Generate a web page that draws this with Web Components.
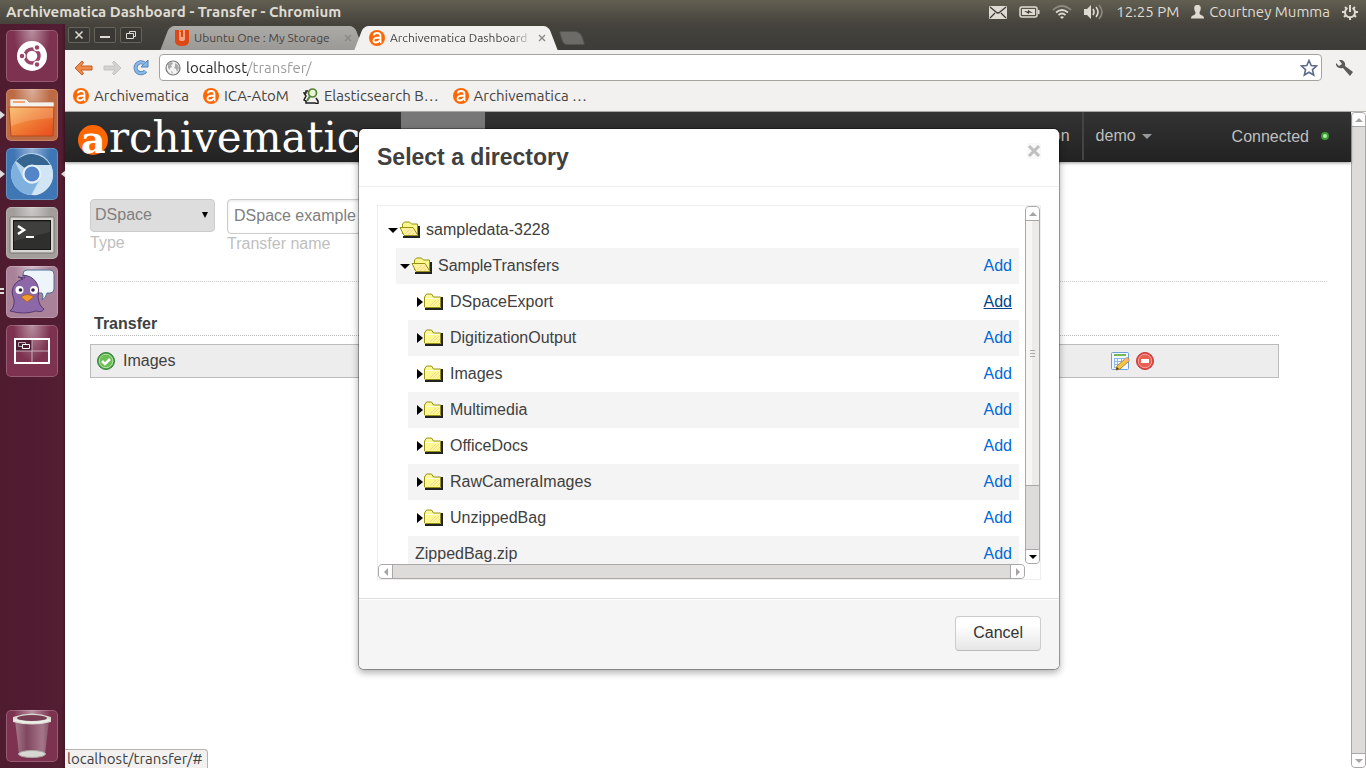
<!DOCTYPE html>
<html lang="en">
<head>
<meta charset="utf-8">
<title>Archivematica Dashboard - Transfer - Chromium</title>
<style>
    html, body {
        height: 100%;
        margin: 0;
    }
    body {
        font-family: "Liberation Sans", Arial, sans-serif;
        font-size: 16px;
        line-height: 20px;
        color: #404040;
        overflow: hidden;
    }
</style>
</head>
<body>
<desktop-shell></desktop-shell>

<script>
const UI_FONT = 'Ubuntu, "Noto Sans", sans-serif';

const icones = {
    mail: `<svg width="18" height="13" viewBox="0 0 18 13"><rect width="18" height="13" rx="1" fill="#dfdbd2"/><path d="M1 1l6 5q2 2 4 0l6-5M1 12l5-5M17 12l-5-5" fill="none" stroke="#3c3b37" stroke-width="1.3"/></svg>`,
    battery: `<svg width="21" height="12" viewBox="0 0 21 12"><rect x="1" y="1" width="17" height="10" rx="2" fill="none" stroke="#dfdbd2" stroke-width="1.5"/><path d="M19 4h1.500v4H19z" fill="#dfdbd2"/><path d="M3 3h13v6H3z" fill="#dfdbd2"/><path d="M5 5l4 .5V4l5 3-4-.5V8z" fill="#3c3b37"/></svg>`,
    wifi: `<svg width="20" height="14" viewBox="0 0 20 14" fill="none" stroke-width="1.700"><path d="M1 5Q10-3 19 5" stroke="#8c897f"/><path d="M4 7.500q6-5 12 0M6.500 10q3.500-3 7 0" stroke="#dfdbd2"/><path d="M8 12q2-1.500 4 0l-2 2z" fill="#dfdbd2"/></svg>`,
    volume: `<svg width="20" height="16" viewBox="0 0 20 16" fill="none" stroke-width="1.600"><path d="M0 5h3l4-4v14l-4-4H0z" fill="#dfdbd2"/><path d="M9 5q2 3 0 6M12 3q4 5 0 10" stroke="#dfdbd2"/><path d="M15 1q6 7 0 14" stroke="#8c897f"/></svg>`,
    user: `<svg width="13" height="14" viewBox="0 0 13 14"><path d="M6.500 0C9.500 0 10 2 9.700 4c-.2 2-1 2.500-1.200 3.500 0 1.500.5 2 2 2.700 2 .8 2.500 1.500 2.500 3.300H0c0-1.800.5-2.500 2.500-3.300 1.500-.7 2-1.200 2-2.700C4.300 6.500 3.500 6 3.300 4 3 2 3.500 0 6.500 0z" fill="#dfdbd2"/></svg>`,
    session: `<svg width="16" height="16" viewBox="0 0 16 16" fill="none" stroke="#dfdbd2"><path d="M5.500 4A5 5 0 1 0 10.500 4" stroke-width="2"/><path d="M8 1v7" stroke-width="2"/><path d="M3 3l1.500 1.500M13 3l-1.500 1.500M0 8h3M13 8h3M2 13l2-2M14 13l-2-2M8 13v3" stroke-width="2"/></svg>`,
    ubuntu: `<svg width="52" height="52" viewBox="0 0 52 52"><circle cx="26" cy="26" r="15" fill="#fff"/><circle cx="26" cy="26" r="7" fill="none" stroke="#9a4668" stroke-width="3.500"/><g stroke="#fff" stroke-width="1.500" fill="#9a4668"><circle cx="16" cy="26" r="3"/><circle cx="31" cy="17.500" r="3"/><circle cx="31" cy="34.500" r="3"/></g></svg>`,
    files: `<svg width="52" height="52" viewBox="0 0 52 52"><defs><linearGradient id="f" x2="1" y2="1"><stop stop-color="#f9b75c"/><stop offset=".45" stop-color="#f08037"/><stop offset="1" stop-color="#e84a1c"/></linearGradient></defs><path d="M4 20V11q0-1 1-1h14q2 0 3 2l1 1h24q1 0 1 1v6z" fill="#f5f2ee" stroke="#bf7a50" stroke-width=".7"/><path d="M7 12h12v2H7z" fill="#f4a577"/><path d="M3 18h45l-1 29H5z" fill="url(#f)" stroke="#b84a1b"/><path d="M4 19h43v10Q22 30 5 37z" fill="#fff" opacity=".16"/></svg>`,
    chromium: `<svg width="52" height="52" viewBox="0 0 52 52"><circle cx="26" cy="26" r="21" fill="#b5d4ee"/><path d="M26 26L10 13a21 21 0 0 1 34 4H27z" fill="#36658f"/><path d="M9 14A21 21 0 0 0 25 47l7-13q-9 5-15-4z" fill="#7fb0de"/><path d="M28 17h17q6 16-6 26-6 5-13 4l9-17z" fill="#d2e5f5"/><circle cx="26" cy="26" r="9.500" fill="#e7f2fb"/><circle cx="26" cy="26" r="7.500" fill="#5485c8"/></svg>`,
    terminal: `<svg width="52" height="52" viewBox="0 0 52 52"><rect x="4" y="10" width="44" height="36" rx="1" fill="#d8d6d4" stroke="#77736f"/><rect x="7.500" y="13.500" width="37" height="29" fill="#2f2f2d" stroke="#171715"/><path d="M8 15h36v10L8 34z" fill="#fff" opacity=".08"/><path d="M12 19l6 4-6 4" fill="none" stroke="#fff" stroke-width="2.500"/><path d="M20 30h8" stroke="#fff" stroke-width="2"/></svg>`,
    pidgin: `<svg width="52" height="52" viewBox="0 0 52 52"><path d="M21 4h23q4 0 4 4v15q0 4-4 4h-3q-1 5-5 7 2-4 0-7H21q-4 0-4-4V8q0-4 4-4z" fill="#edf5fb" stroke="#4e7396"/><path d="M4 45q5-4 4-12-4-8 1-15 3-4 8-5l-5-2 7 1-2-3q9 1 13 7 4 6 2 15 1 9 6 12-2 4-8 2-12 4-26 0z" fill="#8d68a8" stroke="#563a70"/><circle cx="13.500" cy="24" r="4" fill="#fff"/><circle cx="28" cy="24" r="4" fill="#fff"/><circle cx="14.500" cy="24" r="1.800" fill="#33203d"/><circle cx="27" cy="24" r="1.800" fill="#33203d"/><path d="M15 31q6-5 13 0l-7 5z" fill="#f39a2d" stroke="#a65d16" stroke-width=".8"/></svg>`,
    workspaces: `<svg width="52" height="52" viewBox="0 0 52 52" fill="none"><path d="M10 15h16v11H10z" fill="#4d1c33"/><path d="M26 14v24M9 26h34" stroke="#c5b2bc"/><rect x="9" y="14" width="34" height="24" stroke="#fff" stroke-width="2"/><path d="M12.500 17.500h7v4h-7z" stroke="#bcaab4"/><path d="M16.500 19.500h7v4h-7z" stroke="#fff" fill="#4d1c33"/></svg>`,
    trash: `<svg width="52" height="52" viewBox="0 0 52 52"><defs><linearGradient id="t"><stop stop-color="#a5798a"/><stop offset=".35" stop-color="#80475f"/><stop offset=".8" stop-color="#a6758a"/><stop offset="1" stop-color="#85576a"/></linearGradient></defs><path d="M9 10l4 34q13 5 26 0l4-34z" fill="url(#t)"/><ellipse cx="26" cy="44" rx="13.500" ry="3.500" fill="#d8d8d3" stroke="#a9a7a5"/><path d="M7 7q19-7 38 0v5q-19 5-38 0z" fill="#d9d9d3"/><ellipse cx="26" cy="8" rx="15" ry="3" fill="#763c52"/><path d="M8 9q18 5 36 0v2q-18 5-36 0z" fill="#eeeee9"/></svg>`,
    orb: `<svg width="16" height="16" viewBox="0 0 16 16"><circle cx="8" cy="8" r="8" fill="#f60"/><path d="M4.800 5.500Q5 3 8 3q3.500 0 3.500 3v5.500q0 1 1 1M11 7.500Q4.500 7.500 4.500 10.500q0 2 2.300 2Q9.500 12.500 11 10" fill="none" stroke="#fff" stroke-width="1.800"/></svg>`,
    one: `<svg width="14" height="16" viewBox="0 0 14 16"><path d="M0 0h5v9q0 2 2 2t2-2V0h5v11q0 5-7 5t-7-5z" fill="#dd4814"/><path d="M4 0h6v9q0 2-3 2T4 9z" fill="#f1a384"/><path d="M5 1l2-1h1v7H6V2H5z" fill="#dd4814"/></svg>`,
    elastic: `<svg width="16" height="16" viewBox="0 0 16 16" fill="none"><path d="M5 3H3v2H1l2 3-2 4 2 1v2h9l3 1v-3l-2-3" stroke="#1d1d1d" stroke-width="1.500"/><circle cx="9.500" cy="5" r="4" fill="#e9f5d6" stroke="#548434" stroke-width="1.700"/><path d="M7 8l-3 5" stroke="#548434" stroke-width="2"/></svg>`,
    back: `<svg width="19" height="16" viewBox="0 0 19 16"><path d="M1 8l7-7 1.500 1.500L7 6h11v4H7l2.500 3.500L8 15z" fill="#ef8a49" stroke="#c45d24" stroke-linejoin="round"/></svg>`,
    forward: `<svg width="19" height="16" viewBox="0 0 19 16"><path d="M18 8l-7-7-1.500 1.500L12 6H1v4h11l-2.500 3.500L11 15z" fill="#d4d2d0" stroke="#c6c4c1" stroke-linejoin="round"/></svg>`,
    reload: `<svg width="17" height="17" viewBox="0 0 17 17"><path d="M12.500 4.500A5.500 5.500 0 1 0 13.500 12" fill="none" stroke="#4f81b5" stroke-width="4"/><path d="M16 1v7H9z" fill="#8ab8e6" stroke="#4f81b5"/><path d="M12.500 4.500A5.500 5.500 0 1 0 13.500 12" fill="none" stroke="#8ab8e6" stroke-width="2.500"/></svg>`,
    globe: `<svg width="16" height="16" viewBox="0 0 16 16"><circle cx="8" cy="8" r="7" fill="#f4f4f4" stroke="#777" stroke-width="1.200"/><path d="M3 4q2-2 4-2l1 2-2 1 1 2-2 1v2L3 8zM10 3l3 2 1 3-2 4-1-3-2-1 1-2zM6 11l2 1-1 2z" fill="#aaa"/></svg>`,
    star: `<svg width="18" height="18" viewBox="0 0 18 18"><path d="M9 1.500l2.200 5 5.300.5-4 3.600 1.200 5.400L9 13.200 4.300 16l1.200-5.400-4-3.600 5.300-.5z" fill="#fff" stroke="#5d6c8c" stroke-width="1.600"/></svg>`,
    wrench: `<svg width="17" height="16" viewBox="0 0 17 16"><path d="M3 0l3 0q4 2 3 6l8 6-3 4-7-8q-5 1-7-3V3l3 3 3-2z" fill="#5b5b5b"/></svg>`,
    open: `<svg width="21" height="17" viewBox="0 0 21 17"><path d="M4 16h16V5" fill="none" stroke="#222" stroke-width="2"/><path d="M3.500 13V3l2-2h5l2 2h6v10" fill="#fbf78d" stroke="#969017"/><path d="M1 6.500h13l5 8H5z" fill="#fdf29a" stroke="#969017"/><path d="M6 13l5-5M9 14l5-5M13 14l2-2" stroke="#f6cda0"/></svg>`,
    closed: `<svg width="20" height="17" viewBox="0 0 20 17"><path d="M2 16h17V4" fill="none" stroke="#222" stroke-width="2"/><path d="M1.500 14V4l2-3h5l2 3h7v10.500h-15z" fill="#fdf88f" stroke="#969017"/><path d="M2.500 5.500h14" stroke="#fffde0"/><path d="M7 13l6-6M10 13l6-6M14 13l3-3" stroke="#f8d1a0"/></svg>`,
    ok: `<svg width="18" height="18" viewBox="0 0 18 18"><circle cx="9" cy="9" r="8.500" fill="#43a047" stroke="#378239"/><circle cx="9" cy="9" r="6.800" fill="#6cbf55" stroke="#b9e4a8"/><path d="M5 9l3 3 5-5" fill="none" stroke="#fff" stroke-width="2.500"/></svg>`,
    edit: `<svg width="19" height="19" viewBox="0 0 19 19"><rect x=".5" y=".5" width="17" height="17" rx="1" fill="#f2f8ff" stroke="#6da0dc"/><path d="M3 3h12" stroke="#75b85b" stroke-width="2"/><path d="M3 6.500h12M3 9.500h11M3 12.500h6M3.500 6v10M6.500 6v10M10.500 6v5M3 15.500h3" stroke="#8cb9ea"/><path d="M5 18l1-4 9-8q3-1 3 3l-9 8z" fill="#f6c747" stroke="#b48425"/><path d="M5 18l1-3 2 2z" fill="#453417"/><path d="M14 6.500q3-1 4 2l-1.500 1.500-3-2.500z" fill="#efb1a0"/></svg>`,
    remove: `<svg width="18" height="18" viewBox="0 0 18 18"><circle cx="9" cy="9" r="8.500" fill="#dd4141" stroke="#c93838"/><circle cx="9" cy="9" r="6.800" fill="#e76052" stroke="#f5aaa3"/><path d="M5 7h8v4H5z" fill="#fff"/></svg>`,
    dismiss: `<svg width="14" height="16" viewBox="0 0 14 16"><path d="M2 3l10 10M12 3L2 13" stroke="#bfbfbf" stroke-width="3"/></svg>`,
    tabclose: `<svg width="8" height="8" viewBox="0 0 8 8"><path d="M1 1l6 6M7 1L1 7" stroke="#8a8885" stroke-width="1.400"/></svg>`,
    close: `<svg width="22" height="16" viewBox="0 0 22 16"><path d="M7.500 4.500l7 7M14.500 4.500l-7 7" stroke="#dfdbd2" stroke-width="1.500"/></svg>`,
    minimize: `<svg width="22" height="16" viewBox="0 0 22 16"><path d="M6 10h10" stroke="#dfdbd2" stroke-width="2"/></svg>`,
    restore: `<svg width="22" height="16" viewBox="0 0 22 16" fill="none" stroke="#dfdbd2"><path d="M9.500 6.500v-2h6v5h-2M6.500 6.500h7v5h-7z"/></svg>`
};

function definir(nome, html, depois) {
    const template = document.createElement('template');
    template.innerHTML = html;
    customElements.define(nome, class extends HTMLElement {
        constructor() {
            super();
            this.attachShadow({ mode: 'open' }).appendChild(template.content.cloneNode(true));
        }
        connectedCallback() {
            if (depois) depois(this, this.shadowRoot);
        }
    });
}

definir('ui-icon', `
    <style>
        :host { display: inline-flex; flex: none; }
        svg { display: block; }
    </style>
    <span aria-hidden="true"></span>
`, (el, root) => {
    root.querySelector('span').innerHTML = icones[el.getAttribute('name')];
});

definir('top-panel', `
    <style>
        :host {
            display: flex;
            align-items: center;
            box-sizing: border-box;
            height: 24px;
            padding: 0 8px 0 6px;
            background: linear-gradient(#625f52, #45433c);
            color: #dfdbd2;
            font: 15px/24px ${UI_FONT};
        }
        b { flex: 1; }
        .indicadores { display: flex; align-items: center; gap: 12px; }
        .usuario { display: flex; align-items: center; gap: 5px; }
    </style>
    <b>Archivematica Dashboard - Transfer - Chromium</b>
    <div class="indicadores">
        <ui-icon name="mail"></ui-icon>
        <ui-icon name="battery"></ui-icon>
        <ui-icon name="wifi"></ui-icon>
        <ui-icon name="volume"></ui-icon>
        <span>12:25 PM</span>
        <span class="usuario"><ui-icon name="user"></ui-icon>Courtney Mumma</span>
        <ui-icon name="session"></ui-icon>
    </div>
`);

definir('launcher-tile', `
    <style>
        :host { display: block; position: relative; --cor: #7d3350; }
        button {
            display: block;
            box-sizing: border-box;
            width: 52px;
            height: 52px;
            padding: 0;
            border: 0;
            border-radius: 5px;
            background: radial-gradient(ellipse at 50% 0, rgba(255, 255, 255, .45), transparent 50%), var(--cor);
            box-shadow: inset 0 0 0 1px rgba(255, 255, 255, .2);
        }
        .esq, .dir { display: none; position: absolute; top: 22px; border: 4px solid transparent; }
        .esq { left: -6px; border-left: 5px solid #ddd; border-right: 0; }
        .dir { right: -7px; border-right: 5px solid #ddd; border-left: 0; }
        :host([aberto]) .esq, :host([ativo]) .dir { display: block; }
        :host([duplo]) .esq { display: block; width: 4px; height: 2px; border: 2px solid #ddd; border-width: 2px 0; }
    </style>
    <i class="esq"></i><button type="button"><slot></slot></button><i class="dir"></i>
`, (el, root) => root.querySelector('button').setAttribute('aria-label', el.getAttribute('label')));

definir('app-launcher', `
    <style>
        :host {
            display: flex;
            flex-direction: column;
            gap: 7px;
            box-sizing: border-box;
            width: 65px;
            flex: none;
            padding: 6px;
            background: linear-gradient(90deg, #4f1b2f, #531d32 95%, #451628);
        }
        launcher-tile:last-child { margin-top: auto; }
    </style>
    <launcher-tile label="Dash home"><ui-icon name="ubuntu"></ui-icon></launcher-tile>
    <launcher-tile label="Files" aberto style="--cor: #bd6b45"><ui-icon name="files"></ui-icon></launcher-tile>
    <launcher-tile label="Chromium" aberto ativo style="--cor: #3f76b4"><ui-icon name="chromium"></ui-icon></launcher-tile>
    <launcher-tile label="Terminal" style="--cor: #a39e9c"><ui-icon name="terminal"></ui-icon></launcher-tile>
    <launcher-tile label="Pidgin" duplo style="--cor: #a98198"><ui-icon name="pidgin"></ui-icon></launcher-tile>
    <launcher-tile label="Workspaces"><ui-icon name="workspaces"></ui-icon></launcher-tile>
    <launcher-tile label="Trash"><ui-icon name="trash"></ui-icon></launcher-tile>
`);

definir('browser-tab', `
    <style>
        :host {
            display: flex;
            align-items: center;
            position: relative;
            isolation: isolate;
            box-sizing: border-box;
            width: 200px;
            height: 24px;
            padding: 0 9px 0 14px;
            gap: 5px;
            color: #45433f;
            font: 12px/24px ${UI_FONT};
            --fundo: linear-gradient(#adaba8, #9b9996);
        }
        :host([ativa]) { z-index: 1; margin-left: -6px; --fundo: #f2f1f0; }
        .forma { position: absolute; inset: 0; z-index: -1; }
        .forma::before, .forma::after {
            content: "";
            position: absolute;
            top: 0;
            bottom: 0;
            width: 60%;
            background: var(--fundo);
        }
        .forma::before { left: 4px; border-radius: 5px 0 0; transform: skewX(-21deg); }
        .forma::after { right: 2px; border-radius: 0 5px 0 0; transform: skewX(21deg); }
        .titulo { flex: 1; white-space: nowrap; overflow: hidden; }
        :host([ativa]) .titulo { -webkit-mask: linear-gradient(90deg, #000 85%, transparent); }
        button { display: flex; border: 0; padding: 0; background: none; }
    </style>
    <i class="forma"></i>
    <slot name="icone"></slot>
    <span class="titulo"><slot></slot></span>
    <button type="button" aria-label="Close tab"><ui-icon name="tabclose"></ui-icon></button>
`);

definir('browser-tabs', `
    <style>
        :host {
            display: flex;
            align-items: flex-end;
            height: 26px;
            padding-left: 3px;
            background: linear-gradient(#45433c, #3c3b37);
        }
        .controles { display: flex; gap: 4px; align-self: flex-start; margin-top: 3px; margin-right: 19px; }
        .controles button {
            display: flex;
            padding: 0;
            border: 0;
            border-radius: 2px;
            background: #393834;
            box-shadow: inset 0 0 0 1px #67645c;
        }
        .nova {
            width: 22px;
            height: 14px;
            padding: 0;
            margin: 0 0 5px 6px;
            border: 1px solid #55534e;
            border-radius: 2px 6px 2px 4px;
            background: #6d6b67;
            transform: skewX(18deg);
        }
    </style>
    <div class="controles">
        <button type="button" aria-label="Close"><ui-icon name="close"></ui-icon></button>
        <button type="button" aria-label="Minimize"><ui-icon name="minimize"></ui-icon></button>
        <button type="button" aria-label="Restore"><ui-icon name="restore"></ui-icon></button>
    </div>
    <browser-tab><ui-icon slot="icone" name="one"></ui-icon>Ubuntu One : My Storage</browser-tab>
    <browser-tab ativa><ui-icon slot="icone" name="orb"></ui-icon>Archivematica Dashboard</browser-tab>
    <button class="nova" type="button" aria-label="New tab"></button>
`);

definir('browser-toolbar', `
    <style>
        :host {
            display: block;
            background: #f2f1f0;
            border-bottom: 1px solid #b6b3af;
            font: 15px/20px ${UI_FONT};
        }
        .barra { display: flex; align-items: center; gap: 10px; padding: 4px 13px 0 9px; }
        .barra > button, .endereco button { display: flex; padding: 0; border: 0; background: none; }
        .endereco {
            flex: 1;
            display: flex;
            align-items: center;
            gap: 5px;
            height: 25px;
            margin-right: 4px;
            padding: 0 3px 0 5px;
            border: 1px solid #a6a39f;
            border-radius: 4px;
            background: #fff;
        }
        input {
            flex: 1;
            padding: 0;
            border: 0;
            outline: 0;
            font: inherit;
            color: #222;
            background: linear-gradient(90deg, #222 62px, #999 62px);
            -webkit-background-clip: text;
            -webkit-text-fill-color: transparent;
        }
        nav { display: flex; gap: 14px; height: 30px; padding-left: 8px; align-items: center; }
        a { display: flex; align-items: center; gap: 5px; color: #45433f; text-decoration: none; }
    </style>
    <div class="barra">
        <button type="button" aria-label="Back"><ui-icon name="back"></ui-icon></button>
        <button type="button" aria-label="Forward"><ui-icon name="forward"></ui-icon></button>
        <button type="button" aria-label="Reload"><ui-icon name="reload"></ui-icon></button>
        <div class="endereco">
            <ui-icon name="globe"></ui-icon>
            <input type="text" aria-label="Address" value="localhost/transfer/">
            <button type="button" aria-label="Bookmark"><ui-icon name="star"></ui-icon></button>
        </div>
        <button type="button" aria-label="Menu"><ui-icon name="wrench"></ui-icon></button>
    </div>
    <nav>
        <a href="#"><ui-icon name="orb"></ui-icon>Archivematica</a>
        <a href="#"><ui-icon name="orb"></ui-icon>ICA-AtoM</a>
        <a href="#"><ui-icon name="elastic"></ui-icon>Elasticsearch B…</a>
        <a href="#"><ui-icon name="orb"></ui-icon>Archivematica …</a>
    </nav>
`);

definir('scroll-bar', `
    <style>
        :host {
            display: flex;
            flex-direction: column;
            box-sizing: border-box;
            width: 15px;
            border: 1px solid #a9a8a7;
            border-radius: 4px;
            background: #dddcda;
            overflow: hidden;
        }
        :host([horizontal]) { flex-direction: row; width: auto; height: 15px; }
        .seta { display: flex; flex: none; align-items: center; justify-content: center; width: 13px; height: 13px; background: #fefefe; box-shadow: 0 0 0 1px #a9a8a7; }
        .trilho { flex: 1; }
        .polegar { display: none; height: 80%; margin-top: 1px; align-items: center; justify-content: center; background: linear-gradient(90deg, #f7f6f5 50%, #ecebe9 50%); border-bottom: 1px solid #a9a8a7; }
        :host([rolavel]) .polegar { display: flex; }
        .polegar i { width: 5px; height: 7px; background: repeating-linear-gradient(#a9a8a7 0 1px, transparent 1px 3px); }
        path { fill: #a5a4a3; }
        :host([rolavel]) .fim path { fill: #000; }
        :host([horizontal]) svg { transform: rotate(-90deg); }
    </style>
    <div class="seta"><svg width="8" height="4" viewBox="0 0 8 4"><path d="M0 4l4-4 4 4z"/></svg></div>
    <div class="trilho"><div class="polegar"><i></i></div></div>
    <div class="seta fim"><svg width="8" height="4" viewBox="0 0 8 4"><path d="M0 0l4 4 4-4z"/></svg></div>
`);

definir('app-header', `
    <style>
        :host {
            display: flex;
            height: 50px;
            padding-right: 22px;
            background: linear-gradient(#333, #222);
            box-shadow: 0 1px 3px rgba(0, 0, 0, .4);
            color: #bfbfbf;
            line-height: 48px;
        }
        a { color: inherit; text-decoration: none; }
        .marca {
            display: flex;
            align-items: center;
            box-sizing: border-box;
            width: 336px;
            gap: 1px;
            padding: 2px 0 0 13px;
            color: #fff;
            font: 42px/48px "DejaVu Serif", serif;
        }
        .marca span { box-sizing: border-box; width: 30px; height: 30px; margin-top: 4px; padding-left: 3px; border-radius: 50%; background: #f60; font-size: 38px; font-weight: bold; line-height: 30px; }
        nav { flex: 1; display: flex; }
        .atual { width: 84px; background: #777; }
        .admin { margin-left: auto; padding-right: 12px; }
        .conta { padding-left: 12px; border-left: 2px solid #444; margin-bottom: 2px; }
        .conta::after { content: ""; display: inline-block; margin: 0 0 2px 6px; border: 5px solid transparent; border-top-color: #999; border-bottom: 0; }
        .estado { display: flex; align-items: center; gap: 12px; margin-left: 80px; }
        .estado i { width: 4px; height: 4px; margin-bottom: 3px; border: 2px solid #3a9c35; border-radius: 4px; background: #b9eba9; }
    </style>
    <a class="marca" href="#"><span>a</span>rchivematica</a>
    <nav>
        <a class="atual" href="#" aria-label="Transfer"></a>
        <a class="admin" href="#">Administration</a>
        <a class="conta" href="#">demo</a>
    </nav>
    <div class="estado">Connected<i></i></div>
`);

definir('transfer-view', `
    <style>
        :host { display: block; padding: 37px 24px 0 25px; }
        form {
            display: flex;
            gap: 12px;
            padding-bottom: 27px;
            border-bottom: 1px dotted #ccc;
        }
        label { color: #bfbfbf; display: block; }
        select, input {
            display: block;
            box-sizing: border-box;
            border: 1px solid #ccc;
            border-radius: 4px;
            font: inherit;
            color: #808080;
        }
        .seletor { position: relative; padding-bottom: 1px; }
        select { appearance: none; width: 125px; height: 33px; padding: 0 4px 1px; background: #ddd; }
        .seletor::after { content: ""; position: absolute; top: 13px; right: 7px; border: 3px solid transparent; border-top: 6px solid #000; border-bottom: 0; }
        input { width: 250px; height: 35px; padding: 0 6px 1px; background: #fff; box-shadow: inset 0 1px 3px rgba(0, 0, 0, .1); }
        table { width: calc(100% - 48px); margin-top: 24px; border-spacing: 0 8px; }
        th { height: 21px; padding: 0 4px; border-bottom: 1px dotted #bbb; text-align: left; vertical-align: top; }
        td { height: 32px; padding: 0 6px; border: solid #bbb; border-width: 1px 0; background: #ededed; }
        td:first-child { border-left-width: 1px; }
        td:last-child { border-right-width: 1px; width: 161px; }
        td div { display: flex; align-items: center; gap: 8px; }
        td:last-child div { gap: 6px; }
        td button { padding: 0; border: 0; background: none; display: flex; }
    </style>
    <form>
        <div>
            <div class="seletor"><select id="tipo"><option>DSpace</option></select></div>
            <label for="tipo">Type</label>
        </div>
        <div>
            <input id="nome" type="text" value="DSpace example">
            <label for="nome">Transfer name</label>
        </div>
    </form>
    <table>
        <thead><tr><th colspan="2">Transfer</th></tr></thead>
        <tbody><tr>
            <td><div><ui-icon name="ok"></ui-icon>Images</div></td>
            <td><div>
                <button type="button" aria-label="Edit metadata"><ui-icon name="edit"></ui-icon></button>
                <button type="button" aria-label="Remove"><ui-icon name="remove"></ui-icon></button>
            </div></td>
        </tr></tbody>
    </table>
`);

definir('directory-row', `
    <style>
        :host { display: flex; align-items: center; height: 36px; padding: 0 7px; }
        :host([listrada]) { background: #f4f4f4; }
        .seta { display: none; flex: none; border: 5px solid transparent; }
        :host([tipo=open]) .seta { display: block; margin: 0 1px 0 -3px; border-top-color: #000; border-bottom: 0; }
        :host([tipo=closed]) .seta { display: block; margin-left: 2px; border-left: 6px solid #000; border-right: 0; }
        ui-icon { width: 21px; margin: 0 6px 2px 0; }
        .nome { flex: 1; }
        a { color: #0069d6; text-decoration: none; }
        :host([foco]) a { color: #00438a; text-decoration: underline; }
    </style>
    <i class="seta"></i>
    <span class="nome"><slot></slot></span>
`, (el, root) => {
    const tipo = el.getAttribute('tipo');
    if (tipo) {
        const icone = document.createElement('ui-icon');
        icone.setAttribute('name', tipo);
        root.querySelector('.nome').before(icone);
    }
    if (!el.hasAttribute('raiz')) {
        const link = document.createElement('a');
        link.href = '#';
        link.textContent = 'Add';
        root.appendChild(link);
    }
});

const pastas = ['DSpaceExport', 'DigitizationOutput', 'Images', 'Multimedia', 'OfficeDocs', 'RawCameraImages', 'UnzippedBag'];

definir('directory-tree', `
    <style>
        :host { display: grid; grid-template: 358px 15px / 1fr 15px; border: 1px solid #eee; }
        .lista { overflow: hidden; padding: 6px 6px 0; }
        .nivel { margin-left: 12px; }
    </style>
    <div class="lista">
        <directory-row raiz tipo="open">sampledata-3228</directory-row>
        <div class="nivel">
            <directory-row tipo="open" listrada>SampleTransfers</directory-row>
            <div class="nivel" id="pastas"></div>
        </div>
    </div>
    <scroll-bar rolavel></scroll-bar>
    <scroll-bar horizontal></scroll-bar>
`, (el, root) => {
    root.getElementById('pastas').innerHTML = pastas.map((pasta, i) => `
        <directory-row tipo="closed" ${i % 2 ? 'listrada' : ''} ${i === 0 ? 'foco' : ''}>${pasta}</directory-row>
    `).join('') + '<directory-row listrada>ZippedBag.zip</directory-row>';
});

definir('modal-dialog', `
    <style>
        :host {
            display: block;
            width: 700px;
            border: 1px solid rgba(0, 0, 0, .3);
            border-radius: 6px;
            background: #fff;
            background-clip: padding-box;
            box-shadow: 0 3px 7px rgba(0, 0, 0, .3);
            overflow: hidden;
        }
        header { display: flex; align-items: center; justify-content: space-between; height: 57px; padding: 0 18px; border-bottom: 1px solid #eee; }
        h3 { margin: 0; font-size: 23px; line-height: 30px; padding-bottom: 2px; }
        header button { display: flex; padding: 0; margin-bottom: 13px; border: 0; background: #f8f8f8; }
        .corpo { padding: 18px; }
        footer { display: flex; justify-content: flex-end; padding: 17px 18px 18px; border-top: 1px solid #ddd; background: #f5f5f5; box-shadow: inset 0 1px 0 #fff; }
        footer button {
            height: 35px;
            padding: 0 17px 1px;
            border: 1px solid #ccc;
            border-bottom-color: #bbb;
            border-radius: 4px;
            background: linear-gradient(#fff 25%, #e6e6e6);
            font: inherit;
            color: #333;
        }
    </style>
    <header><h3><slot name="titulo"></slot></h3><button type="button" aria-label="Close"><ui-icon name="dismiss"></ui-icon></button></header>
    <div class="corpo"><slot></slot></div>
    <footer><button type="button">Cancel</button></footer>
`);

definir('desktop-shell', `
    <style>
        :host { display: flex; flex-direction: column; height: 100%; }
        .area { flex: 1; display: flex; min-height: 0; }
        .janela { flex: 1; display: flex; flex-direction: column; min-width: 0; }
        .conteudo { flex: 1; display: flex; min-height: 0; }
        .pagina { flex: 1; position: relative; min-width: 0; background: #fff; }
        modal-dialog { position: absolute; top: 16px; left: 50%; margin-left: -350px; z-index: 2; }
        .estado {
            position: absolute;
            left: 0;
            bottom: 0;
            padding: 0 5px 0 2px;
            border: 1px solid #b6b3af;
            border-width: 1px 1px 0 0;
            border-radius: 0 4px 0 0;
            background: #f2f1f0;
            font: 15px/18px ${UI_FONT};
        }
    </style>
    <top-panel></top-panel>
    <div class="area">
        <app-launcher></app-launcher>
        <div class="janela">
            <browser-tabs></browser-tabs>
            <browser-toolbar></browser-toolbar>
            <div class="conteudo">
                <div class="pagina">
                    <app-header></app-header>
                    <transfer-view></transfer-view>
                    <modal-dialog role="dialog" aria-label="Select a directory">
                        <span slot="titulo">Select a directory</span>
                        <directory-tree></directory-tree>
                    </modal-dialog>
                    <div class="estado">localhost/transfer/#</div>
                </div>
                <scroll-bar></scroll-bar>
            </div>
        </div>
    </div>
`);
</script>
</body>
</html>
